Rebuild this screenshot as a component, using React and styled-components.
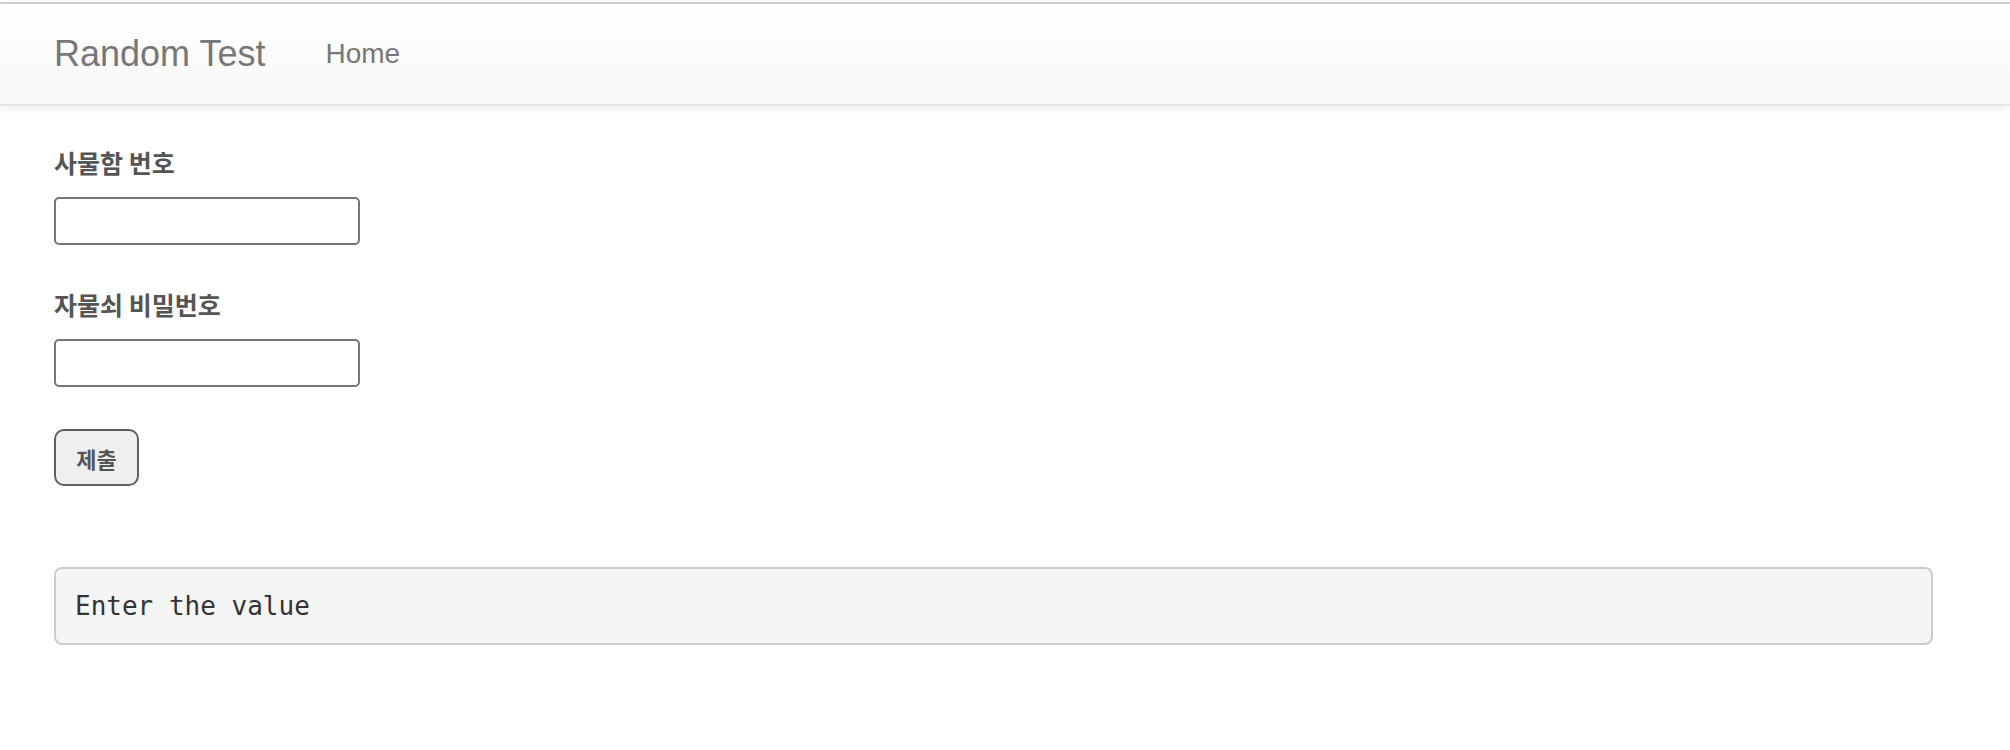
import React from 'react'
import styled, { createGlobalStyle } from 'styled-components'

const GlobalStyle = createGlobalStyle`
  html, body {
    margin: 0;
    padding: 0;
    background: #fff;
  }
  body {
    padding-top: 2px;
    font-family: "Liberation Sans", Arial, sans-serif;
    color: #555;
  }
`

const Navbar = styled.nav`
  height: 100px;
  border-top: 2px solid #cccccc;
  border-bottom: 2px solid #e7e7e7;
  background: linear-gradient(to bottom, #ffffff 0%, #f8f8f8 100%);
  box-shadow: 0 2px 10px rgba(0, 0, 0, 0.075);
  display: flex;
  align-items: center;
  padding-left: 54px;
`

const Brand = styled.a`
  font-family: "Liberation Sans", Arial, sans-serif;
  font-size: 36px;
  color: #777;
  text-decoration: none;
  margin-right: 60px;
  line-height: 1;
`

const NavLink = styled.a`
  font-family: "Liberation Sans", Arial, sans-serif;
  font-size: 28px;
  color: #777;
  text-decoration: none;
  line-height: 1;
`

const Main = styled.main`
  padding: 36px 77px 40px 54px;
  display: flex;
  flex-direction: column;
  align-items: flex-start;
`

const Field = styled.div`
  display: flex;
  flex-direction: column;
  align-items: flex-start;
  margin-bottom: ${p => p.$gap || 39}px;
`

const Label = styled.label`
  font-family: "Noto Sans CJK KR", "Noto Sans", sans-serif;
  font-weight: 700;
  font-size: 25px;
  line-height: 40px;
  height: 40px;
  color: #555;
  margin-bottom: 15px;
`

const Input = styled.input`
  box-sizing: border-box;
  width: 306px;
  height: 48px;
  border: 2px solid #767676;
  border-radius: 5px;
  background: #fff;
  padding: 2px 6px;
  font-size: 26px;
  outline: none;
`

const Button = styled.button`
  box-sizing: border-box;
  width: 85px;
  height: 57px;
  border: 2px solid #5f5f5f;
  border-radius: 10px;
  background: #efefef;
  font-family: "Noto Sans CJK KR", "Noto Sans", sans-serif;
  font-weight: 700;
  font-size: 22px;
  color: #555;
  padding: 0;
  margin-bottom: 81px;
  cursor: pointer;
`

const Output = styled.pre`
  box-sizing: border-box;
  align-self: stretch;
  margin: 0;
  height: 78px;
  padding: 0 19px;
  display: flex;
  align-items: center;
  background: #f5f5f5;
  border: 2px solid #cccccc;
  border-radius: 8px;
  font-family: "DejaVu Sans Mono", "Liberation Mono", monospace;
  font-size: 26px;
  color: #333;
`

export default function App() {
  return (
    <>
      <GlobalStyle />
      <Navbar>
        <Brand href="#">Random Test</Brand>
        <NavLink href="#">Home</NavLink>
      </Navbar>
      <Main>
        <Field>
          <Label htmlFor="locker">사물함 번호</Label>
          <Input id="locker" type="text" />
        </Field>
        <Field $gap={42}>
          <Label htmlFor="lock">자물쇠 비밀번호</Label>
          <Input id="lock" type="password" />
        </Field>
        <Button type="submit">제출</Button>
        <Output>Enter the value</Output>
      </Main>
    </>
  )
}
